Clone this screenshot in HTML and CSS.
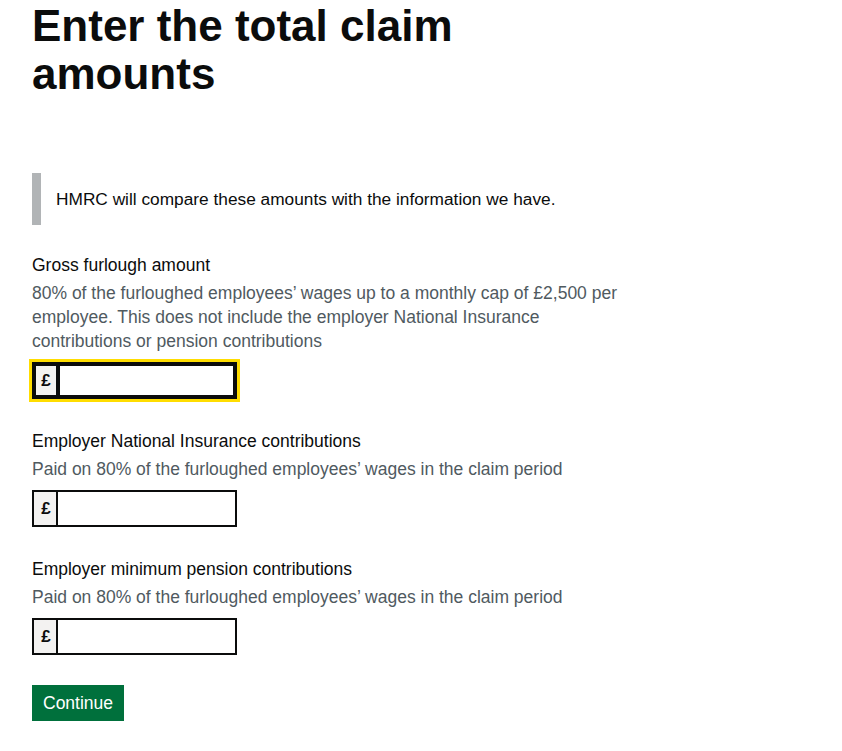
FILE: index.html
```html
<!DOCTYPE html>
<html lang="en">
<head>
<meta charset="utf-8">
<title>Enter the total claim amounts</title>
<link rel="stylesheet" href="styles.css">
</head>
<body>
<main class="page">
  <h1 class="heading">Enter the total claim amounts</h1>
  <div class="inset">HMRC will compare these amounts with the information we have.</div>

  <div class="field field-first">
    <label class="label" for="gross">Gross furlough amount</label>
    <div class="hint">80% of the furloughed employees’ wages up to a monthly cap of £2,500 per employee. This does not include the employer National Insurance contributions or pension contributions</div>
    <div class="input-wrap focused">
      <span class="prefix">£</span>
      <input class="input" id="gross" type="text">
    </div>
  </div>

  <div class="field">
    <label class="label" for="nic">Employer National Insurance contributions</label>
    <div class="hint">Paid on 80% of the furloughed employees’ wages in the claim period</div>
    <div class="input-wrap">
      <span class="prefix">£</span>
      <input class="input" id="nic" type="text">
    </div>
  </div>

  <div class="field">
    <label class="label" for="pension">Employer minimum pension contributions</label>
    <div class="hint">Paid on 80% of the furloughed employees’ wages in the claim period</div>
    <div class="input-wrap">
      <span class="prefix">£</span>
      <input class="input" id="pension" type="text">
    </div>
  </div>

  <button class="button" type="button">Continue</button>
</main>
</body>
</html>
```

FILE: styles.css
```css
html, body {
  margin: 0;
  padding: 0;
  background: #ffffff;
}

body {
  font-family: "Liberation Sans", Arial, sans-serif;
  color: #0b0c0c;
}

.page {
  padding: 0 32px;
  display: flex;
  flex-direction: column;
  align-items: flex-start;
}

.heading {
  margin: 0;
  padding-top: 2px;
  width: 480px;
  font-size: 44px;
  line-height: 48px;
  font-weight: 700;
}

.inset {
  margin-top: 75px;
  border-left: 9px solid #b1b4b6;
  padding: 14px 0 14px 15px;
  font-size: 17.3px;
  line-height: 24px;
}

.field {
  display: flex;
  flex-direction: column;
  align-items: flex-start;
}

.field-first {
  margin-top: 28px;
}

.field + .field {
  margin-top: 30px;
}

.label {
  font-size: 17.5px;
  line-height: 24px;
  margin-bottom: 4px;
}

.hint {
  font-size: 17.5px;
  line-height: 24px;
  color: #505a5f;
  max-width: 600px;
  margin-bottom: 9px;
}

.input-wrap {
  display: flex;
  height: 37px;
}

.prefix {
  width: 24px;
  box-sizing: border-box;
  border: 2px solid #0b0c0c;
  border-right: 0;
  background: #f3f2f1;
  font-weight: 700;
  font-size: 17px;
  display: flex;
  align-items: center;
  justify-content: center;
  padding-left: 2px;
}

.input {
  width: 181px;
  box-sizing: border-box;
  height: 37px;
  margin: 0;
  border: 2px solid #0b0c0c;
  border-radius: 0;
  padding: 4px;
  font-size: 17px;
  background: #ffffff;
}

.focused {
  outline: 3px solid #ffdd00;
}

.focused .input {
  box-shadow: inset 0 0 0 2px #0b0c0c;
}

.focused .prefix {
  box-shadow: inset 2px 2px 0 #0b0c0c, inset 0 -2px 0 #0b0c0c;
}

.button {
  margin-top: 30px;
  border: 0;
  border-radius: 0;
  background: #00703c;
  color: #ffffff;
  font-family: inherit;
  font-size: 17.5px;
  line-height: 20px;
  padding: 8px 11px;
  height: 36px;
  box-shadow: 0 2px 0 #002d18;
  cursor: pointer;
}
```
